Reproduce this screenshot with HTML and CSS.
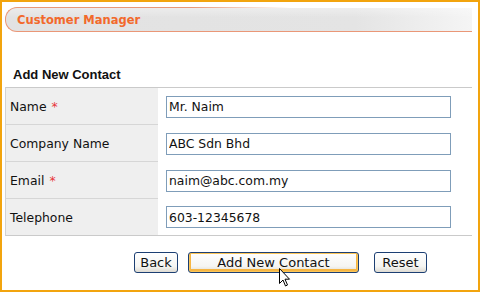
FILE: index.html
```html
<!doctype html>
<html lang="en-US">
  <head>
    <meta charset="utf-8" />
    <title>Customer Manager</title>
    <link rel="stylesheet" href="styles.css">
  </head>

  <body>
    <div class="frame">
      <div class="header">Customer Manager</div>

      <h2 class="title">Add New Contact</h2>

      <div class="form-table">
        <div class="row">
          <div class="label">Name <span class="req">*</span></div>
          <div class="field"><input type="text" value="Mr. Naim"></div>
        </div>
        <div class="row">
          <div class="label">Company Name</div>
          <div class="field"><input type="text" value="ABC Sdn Bhd"></div>
        </div>
        <div class="row">
          <div class="label">Email <span class="req">*</span></div>
          <div class="field"><input type="text" value="naim@abc.com.my"></div>
        </div>
        <div class="row">
          <div class="label">Telephone</div>
          <div class="field"><input type="text" value="603-12345678"></div>
        </div>
      </div>

      <div class="actions">
        <button class="btn back">Back</button>
        <button class="btn add">Add New Contact</button>
        <button class="btn reset">Reset</button>
      </div>

      <!-- mouse pointer hovering the submit button -->
      <svg class="pointer" width="13" height="21" viewBox="0 0 13 21">
        <path d="M0.5 0.5 V15.5 L4 12 L6.5 18 L8.5 17 L6 11.2 H10.5 Z" fill="#fff" stroke="#000" stroke-width="1" stroke-linejoin="miter"/>
      </svg>
    </div>
  </body>
</html>
```

FILE: styles.css
```css
body {
  margin: 0;
  background-color: #fff;
  font-family: "DejaVu Sans", Verdana, sans-serif;
}

.frame {
  position: relative;
  width: 476px;
  height: 288px;
  border: 2px solid #f2a40e;
}

/* title bar with the rounded left end */
.header {
  position: relative;
  display: flex;
  align-items: center;
  height: 23px;
  margin: 5px 6px 0 3px;
  padding-left: 11px;
  border: 1px solid #ea9777;
  border-right: none;
  border-radius: 12px 0 0 12px;
  background: linear-gradient(to bottom, rgba(255,255,255,0.35), rgba(255,255,255,0) 40%),
              linear-gradient(to right, #e2e2e2, #e4e4e4 75%, #f5f5f5);
  color: #f2692b;
  font-weight: bold;
  font-size: 11.5px;
}

/* top edge of the bar fades out to the right */
.header::after {
  content: '';
  position: absolute;
  top: -1px;
  left: 40%;
  right: 0;
  height: 1px;
  background: linear-gradient(to right, rgba(255,255,255,0), #fff 35%);
}

.title {
  margin: 35px 0 0 11px;
  font-family: "Liberation Sans", Arial, sans-serif;
  font-size: 13px;
  line-height: 15px;
  font-weight: bold;
  color: #111;
}

.form-table {
  margin: 5px 6px 0 3px;
  border-top: 1px solid #cacaca;
  border-bottom: 1px solid #cacaca;
  border-left: 1px solid #d2d2d2;
}

.row {
  display: grid;
  grid-template-columns: 152px 1fr;
}

.label {
  display: flex;
  align-items: center;
  height: 36px;
  padding-left: 4px;
  background-color: #efefef;
  border-bottom: 1px solid #d6d6d6;
  font-size: 12.4px;
  color: #111;
}

.row:last-child .label {
  border-bottom: none;
}

.req {
  color: #e8363a;
  margin-left: 5px;
}

.field {
  display: flex;
  align-items: center;
  padding-left: 8px;
}

.field input {
  box-sizing: border-box;
  width: 285px;
  height: 22px;
  margin: 0;
  padding: 0 2px;
  border: 1px solid #7f9db9;
  font-family: "DejaVu Sans", Verdana, sans-serif;
  font-size: 12.4px;
  color: #111;
  background-color: #fff;
}

.actions {
  display: flex;
  margin-top: 16px;
  padding-left: 132px;
}

.btn {
  box-sizing: border-box;
  height: 21px;
  padding: 0;
  border: 1px solid #1c3f73;
  border-radius: 3px;
  background: linear-gradient(to bottom, #fff, #f5f5f2 70%, #dedbd2);
  font-family: "DejaVu Sans", Verdana, sans-serif;
  font-size: 13px;
  color: #111;
}

.back {
  width: 44px;
  margin-right: 10px;
}

.add {
  width: 171px;
  margin-right: 15px;
  box-shadow: inset 0 0 0 1px #fbc65a, inset 0 -1px 0 2px #f6b643;
}

.reset {
  width: 53px;
}

.pointer {
  position: absolute;
  left: 277px;
  top: 266px;
}
```
